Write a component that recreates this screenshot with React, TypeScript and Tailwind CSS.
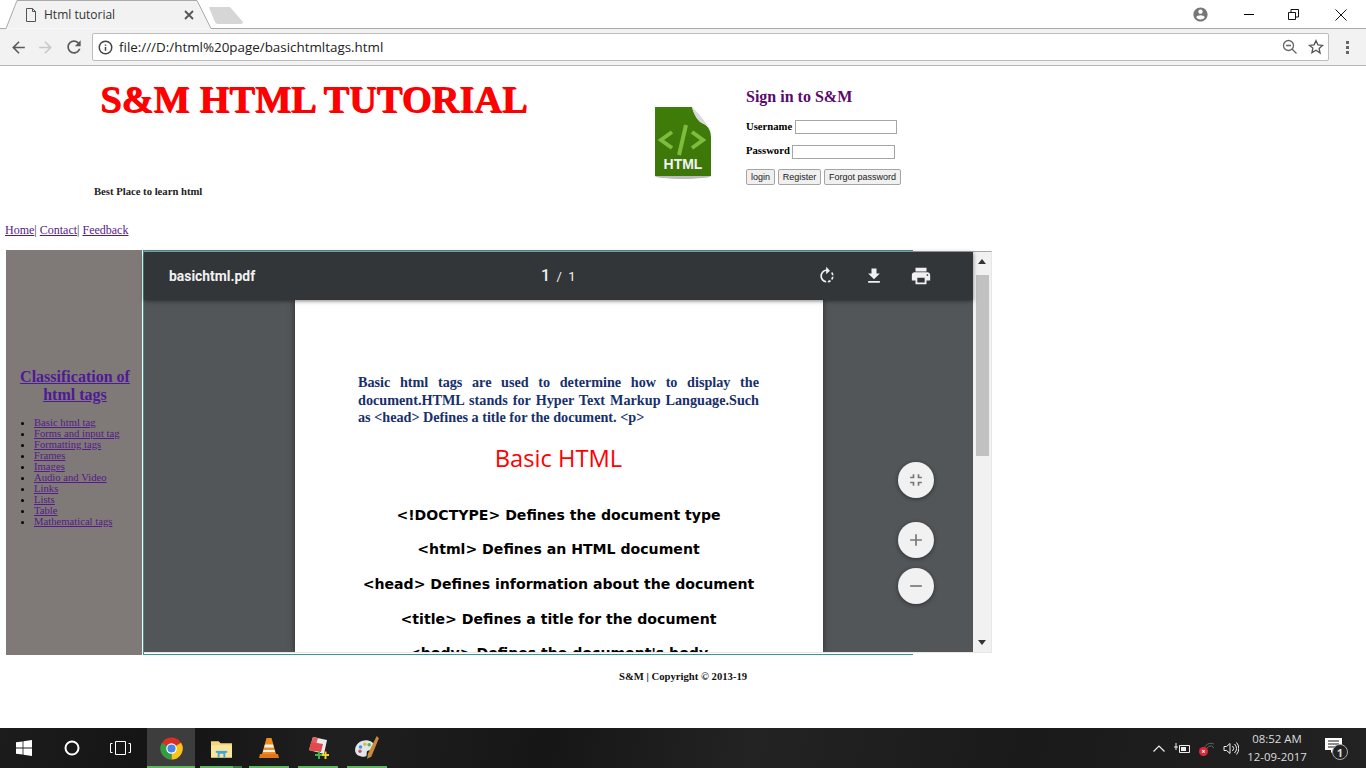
import React from "react";

const Ic = ({ d, size = 24, className = "" }: { d: string; size?: number; className?: string }) => (
  <svg width={size} height={size} viewBox="0 0 24 24" className={className} fill="currentColor"><path d={d} /></svg>
);

const P = {
  back: "M20 11H7.83l5.59-5.59L12 4l-8 8 8 8 1.41-1.41L7.83 13H20v-2z",
  fwd: "M12 4l-1.41 1.41L16.17 11H4v2h12.17l-5.58 5.59L12 20l8-8z",
  reload: "M17.65 6.35C16.2 4.9 14.21 4 12 4c-4.42 0-7.99 3.58-7.99 8s3.57 8 7.99 8c3.73 0 6.84-2.55 7.73-6h-2.08c-.82 2.33-3.04 4-5.65 4-3.31 0-6-2.69-6-6s2.69-6 6-6c1.66 0 3.14.69 4.22 1.78L13 11h7V4l-2.35 2.35z",
  acct: "M12 2C6.48 2 2 6.48 2 12s4.48 10 10 10 10-4.48 10-10S17.52 2 12 2zm0 3c1.66 0 3 1.34 3 3s-1.34 3-3 3-3-1.34-3-3 1.34-3 3-3zm0 14.2c-2.5 0-4.71-1.28-6-3.22.03-1.99 4-3.08 6-3.08 1.99 0 5.97 1.09 6 3.08-1.29 1.94-3.5 3.22-6 3.22z",
  rotate: "M15.55 5.55L11 1v3.07C7.06 4.56 4 7.92 4 12s3.05 7.44 7 7.93v-2.02c-2.84-.48-5-2.94-5-5.91s2.16-5.43 5-5.91V10l4.55-4.45zM19.93 11c-.17-1.39-.72-2.73-1.62-3.89l-1.42 1.42c.54.75.88 1.6 1.02 2.47h2.02zM13 17.9v2.02c1.39-.17 2.74-.71 3.9-1.61l-1.44-1.44c-.75.54-1.59.89-2.46 1.03zm3.89-2.42l1.42 1.41c.9-1.16 1.45-2.5 1.62-3.89h-2.02c-.14.87-.48 1.72-1.02 2.48z",
  dl: "M19 9h-4V3H9v6H5l7 7 7-7zM5 18v2h14v-2H5z",
  print: "M19 8H5c-1.66 0-3 1.34-3 3v6h4v4h12v-4h4v-6c0-1.66-1.34-3-3-3zm-3 11H8v-5h8v5zm3-7c-.55 0-1-.45-1-1s.45-1 1-1 1 .45 1 1-.45 1-1 1zm-1-9H6v4h12V3z",
  fit: "M5 16h3v3h2v-5H5v2zm3-8H5v2h5V5H8v3zm6 11h2v-3h3v-2h-5v5zm2-11V5h-2v5h5V8h-3z",
  plus: "M19 13h-6v6h-2v-6H5v-2h6V5h2v6h6v2z",
  minus: "M19 13H5v-2h14v2z",
};

const links = ["Basic html tag", "Forms and input tag", "Formatting tags", "Frames", "Images", "Audio and Video", "Links", "Lists", "Table", "Mathematical tags"];
const defs = ["<!DOCTYPE> Defines the document type", "<html> Defines an HTML document", "<head> Defines information about the document", "<title> Defines a title for the document", "<body> Defines the document's body"];

const Fab = ({ d, className = "" }: { d: string; className?: string }) => (
  <div className={`flex h-9 w-9 items-center justify-center rounded-full bg-[#f1f1f1] text-[#777] shadow-[0_1px_4px_rgba(0,0,0,0.45)] ${className}`}>
    <Ic d={d} size={20} />
  </div>
);

const HtmlIcon = () => (
  <svg width="60" height="74" viewBox="0 0 60 74" className="block">
    <defs>
      <linearGradient id="g" x1="0" y1="0" x2="0" y2="1"><stop offset="0" stopColor="#3f7d0a" /><stop offset="1" stopColor="#3c7608" /></linearGradient>
    </defs>
    <ellipse cx="29" cy="69" rx="28" ry="3" fill="#bbb" />
    <path d="M1 0H38C40 8 44 15 50 17C55 20 57 25 57 30V69H1Z" fill="url(#g)" />
    <path d="M38 0C40 8 44 15 50 17C54 19 56 21 57 25C51 13 44 6 38 0Z" fill="#d9d9d9" />
    <path d="M18 25L7 33L18 41" fill="none" stroke="#7fbb3c" strokeWidth="4" />
    <path d="M38 25L49 33L38 41" fill="none" stroke="#7fbb3c" strokeWidth="4" />
    <path d="M32 18L25 48" fill="none" stroke="#7fbb3c" strokeWidth="4" />
    <text x="29" y="62" textAnchor="middle" fill="#f2f2f2" fontFamily="'Liberation Sans',sans-serif" fontWeight="700" fontSize="14">HTML</text>
  </svg>
);

const Chrome = () => (
  <svg width="23" height="23" viewBox="0 0 48 48">
    <circle cx="24" cy="24" r="23" fill="#d93025" />
    <path d="M24 24L44 12A23 23 0 0 1 24 47Z" fill="#f5c518" />
    <path d="M24 24L24 47A23 23 0 0 1 4 12.5Z" fill="#2f9e44" />
    <circle cx="24" cy="24" r="11" fill="#fff" />
    <circle cx="24" cy="24" r="8.5" fill="#4a86e8" />
  </svg>
);

const Tile = ({ w, active, children }: { w: string; active?: boolean; children: React.ReactNode }) => (
  <div className={`relative flex h-full items-center justify-center ${w} ${active ? "bg-[#3d3d3d]" : ""}`}>
    {children}
    <div className="absolute bottom-0 left-0 right-0 h-[2px] bg-[#5cb85c]" />
  </div>
);

export default function App() {
  return (
    <div className="flex h-[768px] w-[1366px] flex-col overflow-hidden bg-white font-['Liberation_Serif',serif]">
      {/* tab strip */}
      <div className="relative flex h-[29px] shrink-0 items-center bg-white font-['Open_Sans',sans-serif]">
        <svg width="1366" height="29" className="absolute left-0 top-0">
          <path d="M0 28.5H6L17 .5H197L211 28.5H1366" fill="#f2f2f2" stroke="none" />
          <path d="M0 28.5H6L17 .5H197L211 28.5H1366" fill="none" stroke="#a9a9a9" />
          <path d="M209 7.5Q209 7 211 7H230L243 22Q243 24 241 24H218Q216 24 215 22Z" fill="#d6d6d6" />
        </svg>
        <svg width="14" height="16" viewBox="0 0 14 16" className="relative ml-[24px]" fill="none" stroke="#555"><path d="M2.5 1.5H8.5L11.5 4.5V14.5H2.5ZM8.5 1.5V4.5H11.5" /></svg>
        <span className="relative ml-[6px] w-[140px] text-[12px] text-[#333]">Html tutorial</span>
        <svg width="10" height="10" viewBox="0 0 10 10" className="relative" stroke="#555" strokeWidth="1.8"><path d="M1 1L9 9M9 1L1 9" /></svg>
        <div className="relative ml-auto flex items-center">
          <Ic d={P.acct} size={17} className="mr-[35px] text-[#777]" />
          <div className="mr-[34px] h-px w-[10px] bg-black" />
          <svg width="11" height="11" viewBox="0 0 11 11" className="mr-[36px]" fill="none" stroke="#111"><path d="M.5 3.5H7.5V10.5H.5ZM3 3.5V.5H10.5V8H7.5" /></svg>
          <svg width="12" height="12" viewBox="0 0 12 12" className="mr-[19px]" stroke="#111"><path d="M.5 .5L11.5 11.5M11.5 .5L.5 11.5" /></svg>
        </div>
      </div>
      {/* toolbar */}
      <div className="flex h-[37px] shrink-0 items-center border-b border-[#b5b5b5] bg-[#f2f2f2] pl-[9px] font-['Open_Sans',sans-serif]">
        <Ic d={P.back} size={19} className="text-[#5a5a5a]" />
        <Ic d={P.fwd} size={19} className="ml-[8px] text-[#c8c8c8]" />
        <Ic d={P.reload} size={20} className="ml-[9px] text-[#5a5a5a]" />
        <div className="ml-[8px] flex h-[28px] w-[1237px] items-center rounded-[2px] border border-[#bdbdbd] bg-white pl-[5px] pr-[4px]">
          <svg width="15" height="15" viewBox="0 0 24 24" fill="none" stroke="#444" strokeWidth="2.4"><circle cx="12" cy="12" r="10" /><path d="M12 11v6M12 7v2" /></svg>
          <span className="ml-[6px] text-[13.4px] text-[#222]">file:///D:/html%20page/basichtmltags.html</span>
          <svg width="16" height="16" viewBox="0 0 16 16" className="ml-auto" fill="none" stroke="#666" strokeWidth="1.3"><circle cx="6.5" cy="6.5" r="5" /><path d="M4 6.5H9M10 10L14.5 14.5" /></svg>
          <svg width="16" height="16" viewBox="0 0 24 24" className="ml-[10px] mr-0" fill="none" stroke="#555" strokeWidth="2"><path d="M12 2.5l2.9 6.3 6.9.8-5.1 4.7 1.4 6.8L12 16.9l-6.1 3.5 1.4-6.8L2.2 9.6l6.9-.8z" /></svg>
        </div>
        <div className="ml-[17px] flex flex-col gap-[2px]">
          <div className="h-[3px] w-[3px] bg-[#666]" /><div className="h-[3px] w-[3px] bg-[#666]" /><div className="h-[3px] w-[3px] bg-[#666]" />
        </div>
      </div>

      {/* page */}
      <div className="flex min-h-0 flex-1 flex-col">
        <div className="flex h-[156px] shrink-0">
          <div className="w-[654px] shrink-0">
            <h1 className="ml-[100px] mt-[8px] text-[38.4px] font-bold leading-[50px] text-[#ff0000] [text-shadow:1px_1px_0_#ff0000]">S&amp;M HTML TUTORIAL</h1>
            <p className="ml-[94px] mt-[61px] text-[10.67px] font-bold leading-[12px] text-[#222]">Best Place to learn html</p>
          </div>
          <div className="mt-[41px] w-[92px] shrink-0"><HtmlIcon /></div>
          <div className="pt-[22px]">
            <h2 className="text-[16px] font-bold leading-[18px] text-[#5a0a6e]">Sign in to S&amp;M</h2>
            <div className="mt-[13px] flex h-[15px] items-center text-[10.67px] font-bold text-black"><span className="pb-[2px]">Username</span><div className="ml-[3px] h-[14px] w-[102px] border border-[#a5a5a5] bg-white" /></div>
            <div className="mt-[10px] flex h-[15px] items-center text-[10.67px] font-bold text-black"><span className="pb-[4px]">Password</span><div className="ml-[2px] h-[14px] w-[103px] border border-[#a5a5a5] bg-white" /></div>
            <div className="mt-[10px] flex gap-[3px] text-center font-['Liberation_Sans',sans-serif] text-[9px] leading-[12px] text-[#222]">
              <div className="w-[29px] rounded-[2px] border border-[#a5a5a5] bg-[#f0f0f0] py-px">login</div>
              <div className="w-[43px] rounded-[2px] border border-[#a5a5a5] bg-[#f0f0f0] py-px">Register</div>
              <div className="w-[77px] rounded-[2px] border border-[#a5a5a5] bg-[#f0f0f0] py-px">Forgot password</div>
            </div>
          </div>
        </div>

        <div className="ml-[5px] mt-px h-[14px] text-[12px] leading-[14px] text-[#333]">
          <span className="text-[#551a8b] underline">Home</span>| <span className="text-[#551a8b] underline">Contact</span>| <span className="text-[#551a8b] underline">Feedback</span>
        </div>

        <div className="ml-[6px] mt-[13px] flex h-[405px] shrink-0">
          <aside className="flex w-[136px] shrink-0 flex-col justify-center bg-[#7f7977] pb-[10px]">
            <h3 className="pl-[10px] pr-[8px] text-center text-[16px] font-bold leading-[18px] text-[#4f1a96] underline">Classification of html tags</h3>
            <ul className="mt-[13px] list-disc pl-[28px] text-[10.67px] leading-[11px] text-black">
              {links.map((l) => (
                <li key={l}><span className="text-[#551a8b] underline">{l}</span></li>
              ))}
            </ul>
          </aside>
          <div className="ml-px h-[405px] w-[770px] shrink-0 border-y border-l border-[#2f9b93]">
            {/* pdf viewer */}
            <div className="flex h-[402px] w-[848px] border-y border-r border-b-[#e8e8e8] border-r-[#e8e8e8] border-t-[#a8a8a8] bg-[#525659]">
              <div className="flex min-w-0 flex-1 flex-col">
                <div className="relative z-10 flex h-[48px] shrink-0 items-center bg-[#323639] pl-[25px] font-['Roboto',sans-serif] text-white shadow-[0_1px_4px_rgba(0,0,0,0.5)]">
                  <span className="w-[372px] text-[13.9px] font-bold text-[#f1f1f1]">basichtml.pdf</span>
                  <span className="w-[276px] text-[13px] text-[#f1f1f1]"><span className="text-[16px] font-medium">1</span>&nbsp; /&nbsp; 1</span>
                  <Ic d={P.rotate} size={20} className="text-[#f1f1f1]" />
                  <Ic d={P.dl} size={20} className="ml-[27px] text-[#f1f1f1]" />
                  <Ic d={P.print} size={22} className="ml-[26px] text-[#f1f1f1]" />
                </div>
                <div className="relative min-h-0 flex-1 overflow-hidden">
                  <div className="ml-[151px] h-full w-[528px] bg-white pl-[63px] pr-[64px] pt-[74px] shadow-[0_0_6px_rgba(0,0,0,0.5)]">
                    <p className="text-justify text-[14.2px] font-bold leading-[17.5px] text-[#17306b]">Basic html tags are used to determine how to display the document.HTML stands for Hyper Text Markup Language.Such as &lt;head&gt; Defines a title for the document. &lt;p&gt;</p>
                    <p className="mt-[14px] text-center font-['Open_Sans',sans-serif] text-[23.7px] leading-[34px] text-[#ff0000]">Basic HTML</p>
                    <div className="-mx-[20px] mt-[23px] text-center font-['DejaVu_Sans',sans-serif] text-[14.1px] font-bold leading-[34.7px] text-black">
                      {defs.map((d) => (<div key={d}>{d}</div>))}
                    </div>
                  </div>
                  <Fab d={P.fit} className="absolute left-[754px] top-[162px]" />
                  <Fab d={P.plus} className="absolute left-[754px] top-[222px]" />
                  <Fab d={P.minus} className="absolute left-[754px] top-[268px]" />
                </div>
              </div>
              <div className="flex w-[18px] shrink-0 flex-col items-center bg-[#f1f1f1]">
                <div className="mt-[7px] h-0 w-0 border-x-[4px] border-b-[5px] border-x-transparent border-b-[#333]" />
                <div className="mt-[11px] h-[181px] w-[13px] bg-[#c1c1c1]" />
                <div className="mt-auto mb-[7px] h-0 w-0 border-x-[4px] border-t-[5px] border-x-transparent border-t-[#333]" />
              </div>
            </div>
          </div>
        </div>

        <div className="ml-[619px] mt-[15px] text-[10.67px] font-bold leading-[12px] text-[#111]">S&amp;M | Copyright © 2013-19</div>
      </div>

      {/* taskbar */}
      <div className="flex h-[40px] shrink-0 items-center bg-[linear-gradient(100deg,#1c1c1c_0%,#141414_12%,#1f1f1f_25%,#161616_40%,#232323_55%,#1a1a1a_75%,#222222_100%)] font-['Open_Sans',sans-serif] text-white">
        <svg width="16" height="16" viewBox="0 0 16 16" className="ml-[16px]" fill="#fff"><path d="M0 2.3L6.6 1.4V7.6H0ZM7.4 1.3L16 0V7.6H7.4ZM0 8.4H6.6V14.6L0 13.7ZM7.4 8.4H16V16L7.4 14.7Z" /></svg>
        <svg width="16" height="16" viewBox="0 0 16 16" className="ml-[32px]" fill="none" stroke="#fff" strokeWidth="2"><circle cx="8" cy="8" r="6.5" /></svg>
        <svg width="21" height="14" viewBox="0 0 21 14" className="ml-[30px]" fill="none" stroke="#fff"><path d="M5.5 .5H15.5V13.5H5.5ZM2.5 2.5H.5V11.5H2.5M18.5 2.5H20.5V11.5H18.5" /></svg>
        <div className="ml-[16px] flex h-full">
          <Tile w="w-[48px]" active><Chrome /></Tile>
          <div className="relative ml-[5px]">
            <Tile w="w-[42px]">
              <svg width="21" height="19" viewBox="0 0 22 19"><path d="M0 2H8L10 4H22V19H0Z" fill="#f5d77a" /><path d="M0 6H22V19H0Z" fill="#fbe59b" /><path d="M7 19V13H15V19H13V15H9V19Z" fill="#3ea6e0" /><path d="M5 12H17V14H5Z" fill="#3ea6e0" /></svg>
            </Tile>
            <div className="absolute bottom-0 right-0 h-[2px] w-[9px] bg-[#3e7a3e]" />
          </div>
          <div className="ml-[7px]">
            <Tile w="w-[40px]">
              <svg width="20" height="22" viewBox="0 0 20 22"><path d="M7.5 1H12.5L17 17H3Z" fill="#f28c1e" /><path d="M6 7.5H14L14.8 10.5H5.2Z" fill="#f4f4f4" /><path d="M4.5 13H15.5L16 15H4Z" fill="#f4f4f4" /><path d="M1 17H19L20 21H0Z" fill="#e2761a" /></svg>
            </Tile>
          </div>
          <div className="ml-[9px]">
            <Tile w="w-[40px]">
              <svg width="22" height="24" viewBox="0 0 22 24"><path d="M6 1L20 4L17 18L2 14Z" fill="#e9e9ee" /><path d="M6 1L11 2L7 15.5L2 14Z" fill="#e85c5c" /><path d="M4 6L16 8L14 16L2 14Z" fill="#e04a4a" /><path d="M8 18H11V15.5H13V18H16V20H13V23H11V20H8Z" fill="#39b54a" /><path d="M15 18H17.5V15.5H19.5V18H22V20H19.5V23H17.5V20H15Z" fill="#f5d023" /></svg>
            </Tile>
          </div>
          <div className="ml-[9px]">
            <Tile w="w-[40px]">
              <svg width="26" height="26" viewBox="0 0 24 24"><path d="M1 14C1 8 7 4 13 5C18 6 20 10 18 13C16 15 14 13 12 15C11 18 13 20 9 20C5 20 1 18 1 14Z" fill="#dfe7ee" /><circle cx="6" cy="11" r="1.6" fill="#3f8fd9" /><circle cx="10" cy="8.5" r="1.6" fill="#e8b63a" /><circle cx="14" cy="9" r="1.6" fill="#5fb14a" /><circle cx="5.5" cy="15" r="1.6" fill="#d9534f" /><path d="M21 1L23 3L16 20L12 22L13 17Z" fill="#c98a3a" /></svg>
            </Tile>
          </div>
        </div>
        <div className="ml-auto flex h-full items-center">
          <svg width="12" height="7" viewBox="0 0 12 7" fill="none" stroke="#eee" strokeWidth="1.2"><path d="M.5 6.5L6 1L11.5 6.5" /></svg>
          <svg width="16" height="11" viewBox="0 0 16 11" className="ml-[9px]" fill="none" stroke="#eee"><path d="M5.5 2.5H15.5V9.5H5.5Z" /><path d="M7 4H12V8H7Z" fill="#eee" stroke="none" /><path d="M0 4H4M2 0V4V7" /></svg>
          <div className="relative ml-[10px] h-[15px] w-[15px]">
            <svg width="15" height="15" viewBox="0 0 15 15" fill="none" stroke="#666"><path d="M4 9A7 7 0 0 1 14 3M7 11A4 4 0 0 1 14 7" /></svg>
            <div className="absolute -left-[1px] bottom-0 flex h-[9px] w-[9px] items-center justify-center rounded-full bg-[#e32636] text-[7px] font-bold leading-none">×</div>
          </div>
          <svg width="16" height="13" viewBox="0 0 16 13" className="ml-[8px]" fill="none" stroke="#eee"><path d="M1 4.5H3.5L7 1.5V11.5L3.5 8.5H1ZM9.5 4A3.5 3.5 0 0 1 9.5 9M11.5 2A6 6 0 0 1 11.5 11M13.5 .5A9 9 0 0 1 13.5 12.5" /></svg>
          <div className="ml-[3px] flex w-[70px] flex-col items-center text-[11.4px] leading-[18px] text-[#ddd]">
            <span>08:52 AM</span>
            <span>12-09-2017</span>
          </div>
          <div className="relative ml-[13px] mr-[17px] h-[24px] w-[24px]">
            <svg width="17" height="16" viewBox="0 0 17 16" className="absolute left-0 top-[2px]" fill="#fff"><path d="M0 0H17V12H9L6 15V12H0Z" /><path d="M3 3H14M3 6H14M3 9H11" stroke="#1a1a1a" /></svg>
            <div className="absolute left-[7px] top-[8px] flex h-[16px] w-[16px] items-center justify-center rounded-full border border-[#aaa] bg-[#222] text-[11px] font-bold leading-none text-[#ddd]">1</div>
          </div>
        </div>
      </div>
    </div>
  );
}
